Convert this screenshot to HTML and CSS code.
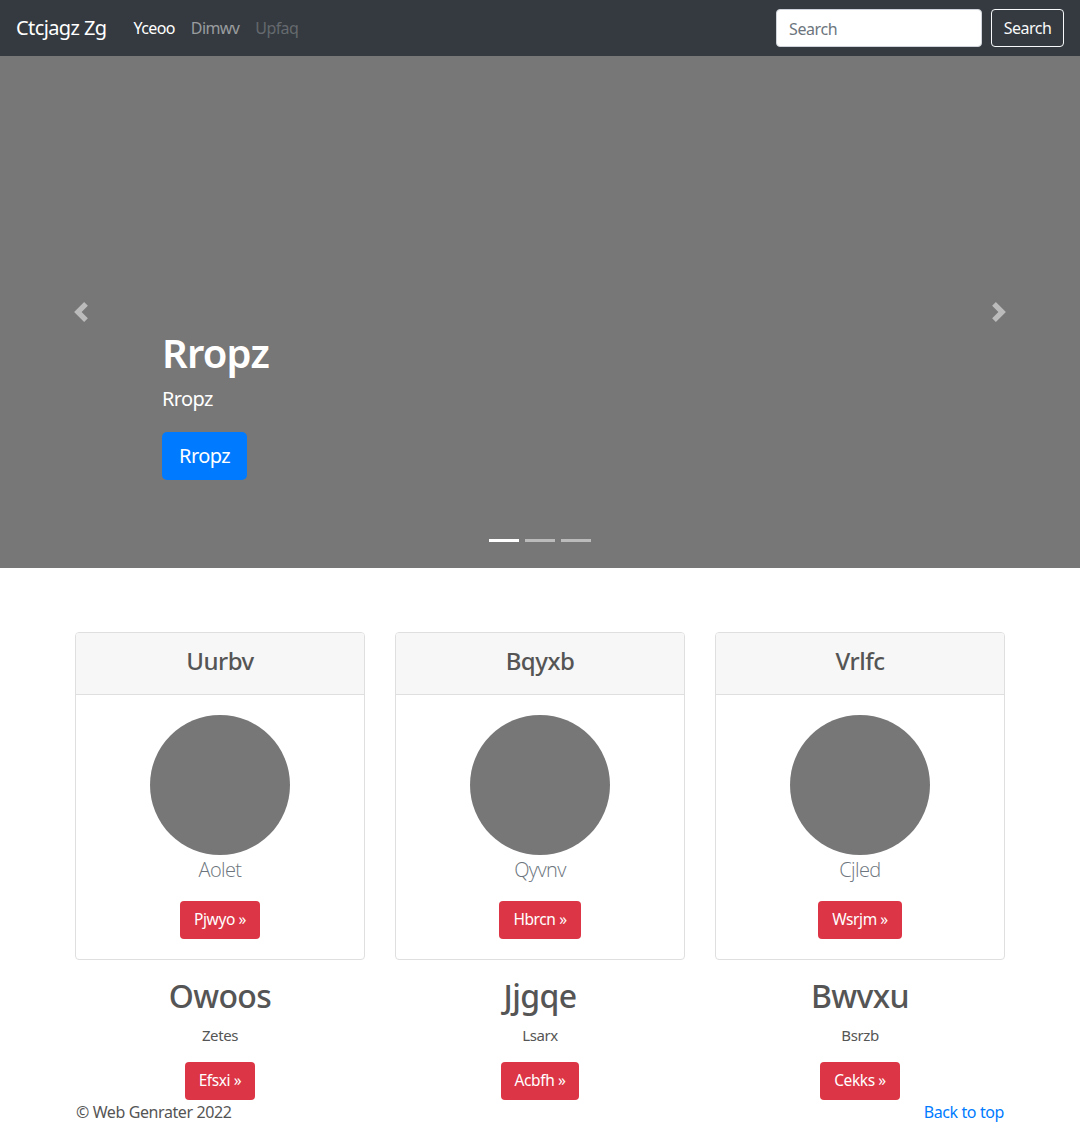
FILE: index.html
```html
<!DOCTYPE html>
<html lang="en">
<head>
<meta charset="utf-8">
<title>Carousel</title>
<link rel="stylesheet" href="styles.css">
</head>
<body>
<header class="navbar">
  <a class="brand" href="#">Ctcjagz Zg</a>
  <nav class="nav">
    <a class="nav-link active" href="#">Yceoo</a>
    <a class="nav-link" href="#">Dimwv</a>
    <a class="nav-link disabled" href="#">Upfaq</a>
  </nav>
  <form class="search">
    <input class="search-input" type="text" placeholder="Search">
    <button class="btn-outline" type="button">Search</button>
  </form>
</header>

<section class="carousel">
  <a class="control prev" href="#">
    <svg width="20" height="20" viewBox="0 0 8 8"><path fill="#fff" d="M5.25 0l-4 4 4 4 1.5-1.5L4.25 4l2.5-2.5L5.25 0z"/></svg>
  </a>
  <div class="caption">
    <h1 class="caption-title">Rropz</h1>
    <p class="caption-text">Rropz</p>
    <a class="btn-lg" href="#">Rropz</a>
  </div>
  <a class="control next" href="#">
    <svg width="20" height="20" viewBox="0 0 8 8"><path fill="#fff" d="M2.75 0l-1.5 1.5L3.75 4l-2.5 2.5L2.75 8l4-4-4-4z"/></svg>
  </a>
  <ol class="indicators">
    <li class="ind active"></li>
    <li class="ind"></li>
    <li class="ind"></li>
  </ol>
</section>

<main class="container">
  <div class="row">
    <div class="col">
      <div class="card">
        <div class="card-header"><h4 class="card-title">Uurbv</h4></div>
        <div class="card-body">
          <div class="avatar"></div>
          <div class="card-name">Aolet</div>
          <a class="btn-danger" href="#">Pjwyo &raquo;</a>
        </div>
      </div>
      <h2 class="mk-title">Owoos</h2>
      <p class="mk-text">Zetes</p>
      <a class="btn-danger" href="#">Efsxi &raquo;</a>
    </div>
    <div class="col">
      <div class="card">
        <div class="card-header"><h4 class="card-title">Bqyxb</h4></div>
        <div class="card-body">
          <div class="avatar"></div>
          <div class="card-name">Qyvnv</div>
          <a class="btn-danger" href="#">Hbrcn &raquo;</a>
        </div>
      </div>
      <h2 class="mk-title">Jjgqe</h2>
      <p class="mk-text">Lsarx</p>
      <a class="btn-danger" href="#">Acbfh &raquo;</a>
    </div>
    <div class="col">
      <div class="card">
        <div class="card-header"><h4 class="card-title">Vrlfc</h4></div>
        <div class="card-body">
          <div class="avatar"></div>
          <div class="card-name">Cjled</div>
          <a class="btn-danger" href="#">Wsrjm &raquo;</a>
        </div>
      </div>
      <h2 class="mk-title">Bwvxu</h2>
      <p class="mk-text">Bsrzb</p>
      <a class="btn-danger" href="#">Cekks &raquo;</a>
    </div>
  </div>
  <footer class="footer">
    <p class="copy">&copy; Web Genrater 2022</p>
    <a class="to-top" href="#">Back to top</a>
  </footer>
</main>
</body>
</html>
```
FILE: styles.css
```css
* { box-sizing: border-box; }
html, body { margin: 0; padding: 0; }
body {
  font-family: "Noto Sans", "Open Sans", sans-serif;
  font-size: 16px;
  line-height: 1.5;
  color: #555;
  background: #fff;
  width: 1080px;
  height: 1124px;
  overflow: hidden;
}
a { text-decoration: none; }

.navbar {
  height: 56px;
  background: #343a40;
  display: flex;
  align-items: center;
  padding: 0 16px;
}
.brand {
  color: #fff;
  font-size: 20px;
  line-height: 30px;
  margin-right: 19px;
  letter-spacing: -0.6px;
}
.nav { display: flex; flex: 1; }
.nav-link {
  padding: 8px;
  color: rgba(255,255,255,.5);
  letter-spacing: -0.6px;
}
.nav-link.active { color: #fff; }
.nav-link.disabled { color: rgba(255,255,255,.25); }
.search { display: flex; align-items: center; gap: 9px; }
.search-input {
  width: 206px;
  height: 38px;
  border: 1px solid #ced4da;
  border-radius: 4px;
  padding: 7px 12px 5px;
  font: inherit;
  font-size: 16px;
  letter-spacing: -0.4px;
  color: #495057;
  background: #fff;
}
.search-input::placeholder { color: #6c757d; }
.btn-outline {
  height: 38px;
  width: 73px;
  border: 1px solid #f8f9fa;
  border-radius: 4px;
  background: transparent;
  color: #f8f9fa;
  font: inherit;
  font-size: 16px;
  letter-spacing: -0.5px;
  padding: 0;
}

.carousel {
  position: relative;
  height: 512px;
  background: #777;
}
.control {
  position: absolute;
  top: 0;
  bottom: 0;
  width: 162px;
  display: flex;
  align-items: center;
  justify-content: center;
  opacity: .5;
}
.control.prev { left: 0; }
.control.next { right: 0; }
.caption {
  position: absolute;
  left: 162px;
  right: 162px;
  top: 273px;
  color: #fff;
  display: flex;
  flex-direction: column;
  align-items: flex-start;
}
.caption-title {
  margin: 0 0 8px;
  font-size: 40px;
  line-height: 48px;
  font-weight: 600;
  letter-spacing: -0.8px;
}
.caption-text {
  margin: 0 0 19px;
  font-size: 20px;
  line-height: 28px;
  letter-spacing: -0.6px;
}
.btn-lg {
  height: 48px;
  width: 85px;
  display: flex;
  align-items: center;
  justify-content: center;
  background: #007bff;
  color: #fff;
  border-radius: 5px;
  font-size: 20px;
  letter-spacing: -0.6px;
}
.indicators {
  position: absolute;
  left: 0;
  right: 0;
  bottom: 26px;
  margin: 0;
  padding: 0;
  list-style: none;
  display: flex;
  justify-content: center;
  gap: 6px;
}
.ind {
  width: 30px;
  height: 3px;
  background: #fff;
  opacity: .5;
}
.ind.active { opacity: 1; }

.container {
  width: 960px;
  margin: 0 auto;
  padding: 64px 15px 0;
}
.row {
  display: grid;
  grid-template-columns: repeat(3, 1fr);
  gap: 30px;
}
.col {
  display: flex;
  flex-direction: column;
  align-items: center;
  text-align: center;
}
.card {
  width: 100%;
  border: 1px solid #dfdfdf;
  border-radius: 4px;
  overflow: hidden;
}
.card-header {
  height: 62px;
  background: #f7f7f7;
  border-bottom: 1px solid #dfdfdf;
  display: flex;
  align-items: center;
  justify-content: center;
  padding-bottom: 6px;
}
.card-title {
  margin: 0;
  font-size: 24px;
  font-weight: 500;
  letter-spacing: -0.5px;
  color: #555;
}
.card-body {
  padding: 20px 20px 20px;
  display: flex;
  flex-direction: column;
  align-items: center;
}
.avatar {
  width: 140px;
  height: 140px;
  border-radius: 50%;
  background: #777;
}
.card-name {
  font-family: "Open Sans", sans-serif;
  font-weight: 300;
  font-size: 20px;
  line-height: 30px;
  color: #6c757d;
  margin-bottom: 16px;
  letter-spacing: -0.6px;
}
.btn-danger {
  display: inline-flex;
  align-items: center;
  justify-content: center;
  height: 38px;
  padding: 0 14px;
  background: #dc3545;
  color: #fff;
  border-radius: 4px;
  font-size: 15.5px;
  letter-spacing: -0.4px;
}
.mk-title {
  margin: 17px 0 8px;
  font-size: 32px;
  line-height: 38px;
  font-weight: 500;
  letter-spacing: -0.6px;
  color: #555;
}
.mk-text {
  margin: 0 0 15px;
  font-size: 15px;
  line-height: 24px;
  letter-spacing: -0.4px;
}
.footer {
  display: flex;
  justify-content: space-between;
  align-items: center;
  height: 24px;
  padding: 0 1px;
}
.copy { margin: 0; letter-spacing: -0.4px; }
.to-top { color: #007bff; letter-spacing: -0.4px; }
```
